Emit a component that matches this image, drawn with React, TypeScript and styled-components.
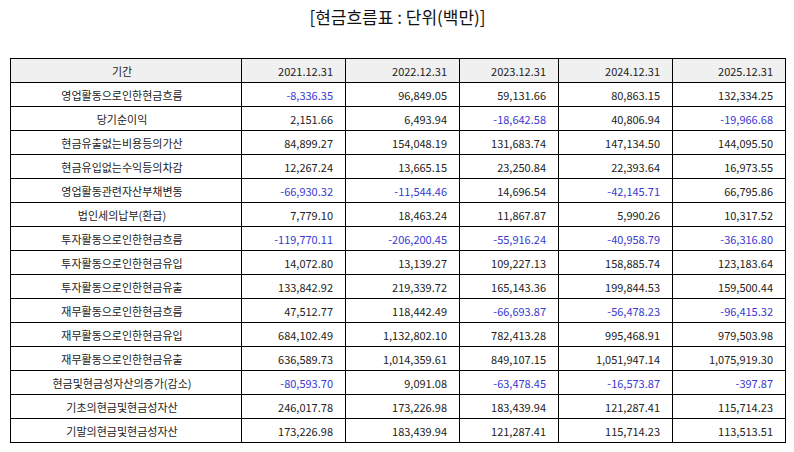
import React from "react";
import styled, { createGlobalStyle } from "styled-components";

interface Row {
  label: string;
  values: number[];
}

const years = ["2021.12.31", "2022.12.31", "2023.12.31", "2024.12.31", "2025.12.31"];

const rows: Row[] = [
  { label: "영업활동으로인한현금흐름", values: [-8336.35, 96849.05, 59131.66, 80863.15, 132334.25] },
  { label: "당기순이익", values: [2151.66, 6493.94, -18642.58, 40806.94, -19966.68] },
  { label: "현금유출없는비용등의가산", values: [84899.27, 154048.19, 131683.74, 147134.5, 144095.5] },
  { label: "현금유입없는수익등의차감", values: [12267.24, 13665.15, 23250.84, 22393.64, 16973.55] },
  { label: "영업활동관련자산부채변동", values: [-66930.32, -11544.46, 14696.54, -42145.71, 66795.86] },
  { label: "법인세의납부(환급)", values: [7779.1, 18463.24, 11867.87, 5990.26, 10317.52] },
  { label: "투자활동으로인한현금흐름", values: [-119770.11, -206200.45, -55916.24, -40958.79, -36316.8] },
  { label: "투자활동으로인한현금유입", values: [14072.8, 13139.27, 109227.13, 158885.74, 123183.64] },
  { label: "투자활동으로인한현금유출", values: [133842.92, 219339.72, 165143.36, 199844.53, 159500.44] },
  { label: "재무활동으로인한현금흐름", values: [47512.77, 118442.49, -66693.87, -56478.23, -96415.32] },
  { label: "재무활동으로인한현금유입", values: [684102.49, 1132802.1, 782413.28, 995468.91, 979503.98] },
  { label: "재무활동으로인한현금유출", values: [636589.73, 1014359.61, 849107.15, 1051947.14, 1075919.3] },
  { label: "현금및현금성자산의증가(감소)", values: [-80593.7, 9091.08, -63478.45, -16573.87, -397.87] },
  { label: "기초의현금및현금성자산", values: [246017.78, 173226.98, 183439.94, 121287.41, 115714.23] },
  { label: "기말의현금및현금성자산", values: [173226.98, 183439.94, 121287.41, 115714.23, 113513.51] },
];

// column widths measured from border to border
const colWidths = [231, 104, 114, 99, 114, 113];

const fmt = (n: number) =>
  n.toLocaleString("en-US", { minimumFractionDigits: 2, maximumFractionDigits: 2 });

const GlobalStyle = createGlobalStyle`
  body {
    margin: 0;
    background: #fff;
    font-family: "Noto Sans CJK KR", "Noto Sans", sans-serif;
    color: #222;
  }
`;

const Page = styled.div`
  padding: 0 9px 0 10px;
`;

const Title = styled.h2`
  margin: 0;
  height: 58px;
  padding-top: 5px;
  box-sizing: border-box;
  text-align: center;
  font-size: 17px;
  font-weight: 400;
  line-height: 24px;
  color: #111;
`;

const Table = styled.table`
  width: 776px;
  border-collapse: collapse;
  table-layout: fixed;
  font-size: 11px;
`;

const Cell = styled.td<{ $negative?: boolean; $label?: boolean }>`
  height: 24px;
  padding: 0 12px 0 4px;
  border: 1px solid #000;
  text-align: ${({ $label }) => ($label ? "center" : "right")};
  color: ${({ $negative }) => ($negative ? "#3838d0" : "#222")};
  white-space: nowrap;
  line-height: 14px;
  box-sizing: border-box;
`;

const HeadCell = styled.th<{ $width: number; $label?: boolean }>`
  width: ${({ $width }) => $width}px;
  height: 24px;
  padding: 0 12px 0 4px;
  border: 1px solid #000;
  background: #f0f0f0;
  font-weight: 400;
  color: #222;
  text-align: ${({ $label }) => ($label ? "center" : "right")};
  box-sizing: border-box;
`;

export default function App() {
  return (
    <Page>
      <GlobalStyle />
      <Title>[현금흐름표 : 단위(백만)]</Title>
      <Table>
        <thead>
          <tr>
            <HeadCell $width={colWidths[0]} $label>
              기간
            </HeadCell>
            {years.map((y, i) => (
              <HeadCell key={y} $width={colWidths[i + 1]}>
                {y}
              </HeadCell>
            ))}
          </tr>
        </thead>
        <tbody>
          {rows.map((row) => (
            <tr key={row.label}>
              <Cell $label>{row.label}</Cell>
              {row.values.map((v, i) => (
                <Cell key={i} $negative={v < 0}>
                  {fmt(v)}
                </Cell>
              ))}
            </tr>
          ))}
        </tbody>
      </Table>
    </Page>
  );
}
